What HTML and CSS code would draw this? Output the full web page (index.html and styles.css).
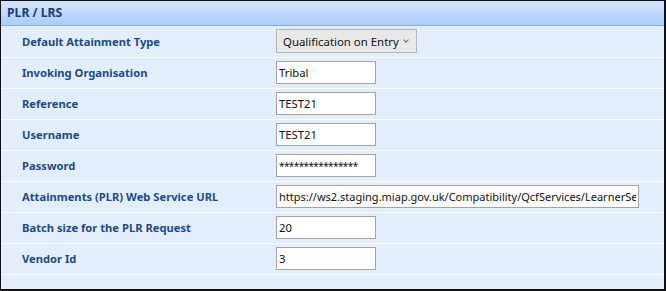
FILE: index.html
```html
<!DOCTYPE html>
<html>
  <head>
    <meta charset="utf-8">
    <title>PLR / LRS</title>
    <link rel="stylesheet" href="styles.css">
  </head>
  <body>
    <div class="panel">
      <div class="panel-head">PLR / LRS</div>
      <table class="form">
        <tr>
          <td class="label">Default Attainment Type</td>
          <td><div class="select"><span>Qualification on Entry</span><span class="caret"></span></div></td>
        </tr>
        <tr>
          <td class="label">Invoking Organisation</td>
          <td><input class="box" type="text" value="Tribal"></td>
        </tr>
        <tr>
          <td class="label">Reference</td>
          <td><input class="box" type="text" value="TEST21"></td>
        </tr>
        <tr>
          <td class="label">Username</td>
          <td><input class="box" type="text" value="TEST21"></td>
        </tr>
        <tr>
          <td class="label">Password</td>
          <td><input class="box pw" type="text" value="****************"></td>
        </tr>
        <tr>
          <td class="label">Attainments (PLR) Web Service URL</td>
          <td><input class="box wide" type="text" value="https://ws2.staging.miap.gov.uk/Compatibility/QcfServices/LearnerService.svc"></td>
        </tr>
        <tr>
          <td class="label">Batch size for the PLR Request</td>
          <td><input class="box" type="text" value="20"></td>
        </tr>
        <tr>
          <td class="label">Vendor Id</td>
          <td><input class="box" type="text" value="3"></td>
        </tr>
      </table>
    </div>
  </body>
</html>
```

FILE: styles.css
```css
*{margin: 0;padding: 0;box-sizing: border-box;}
body {font-family: "Noto Sans", "Open Sans", sans-serif;background: #fff;}

.panel {
  width: 666px;
  height: 291px;
  border: 1px solid #111;
  border-width: 1px 2px 2px 1px;
  background: #e3eefc;
}
.panel-head {
  height: 25px;
  padding: 3px 0 0 6px;
  font-size: 12.2px;
  font-weight: bold;
  color: #1d3f73;
  background: linear-gradient(#d5e5fb, #a9cdfb);
  border-bottom: 1px solid #86aee3;
}

.form {border-collapse: collapse;width: 100%;}
.form td {height: 31px;border-bottom: 1px solid #fff;vertical-align: middle;padding: 0;}
.form td.label {
  width: 275px;
  padding-left: 21px;
  font-size: 11.2px;
  font-weight: bold;
  color: #1f4a86;
}

.box {
  display: block;
  width: 100px;
  height: 23px;
  border: 1px solid #a3a3a3;
  background: #fff;
  padding: 0 2px;
  font-family: "Noto Sans", "Open Sans", sans-serif;
  font-size: 11.3px;
  color: #111;
  outline: none;
}
.box.pw {font-size: 10px;letter-spacing: -0.6px;}
.box.wide {width: 363px;font-size: 11px;}

.select {
  display: flex;
  align-items: center;
  justify-content: space-between;
  width: 141px;
  height: 24px;
  border: 1px solid #b4b4b4;
  background: #e8e8e8;
  padding: 0 8px 0 6px;
  font-size: 11.4px;
  color: #111;
  white-space: nowrap;
}
.caret {
  width: 4px;
  height: 4px;
  margin-bottom: 2px;
  border: solid #666;
  border-width: 0 1px 1px 0;
  transform: rotate(45deg);
}
```
